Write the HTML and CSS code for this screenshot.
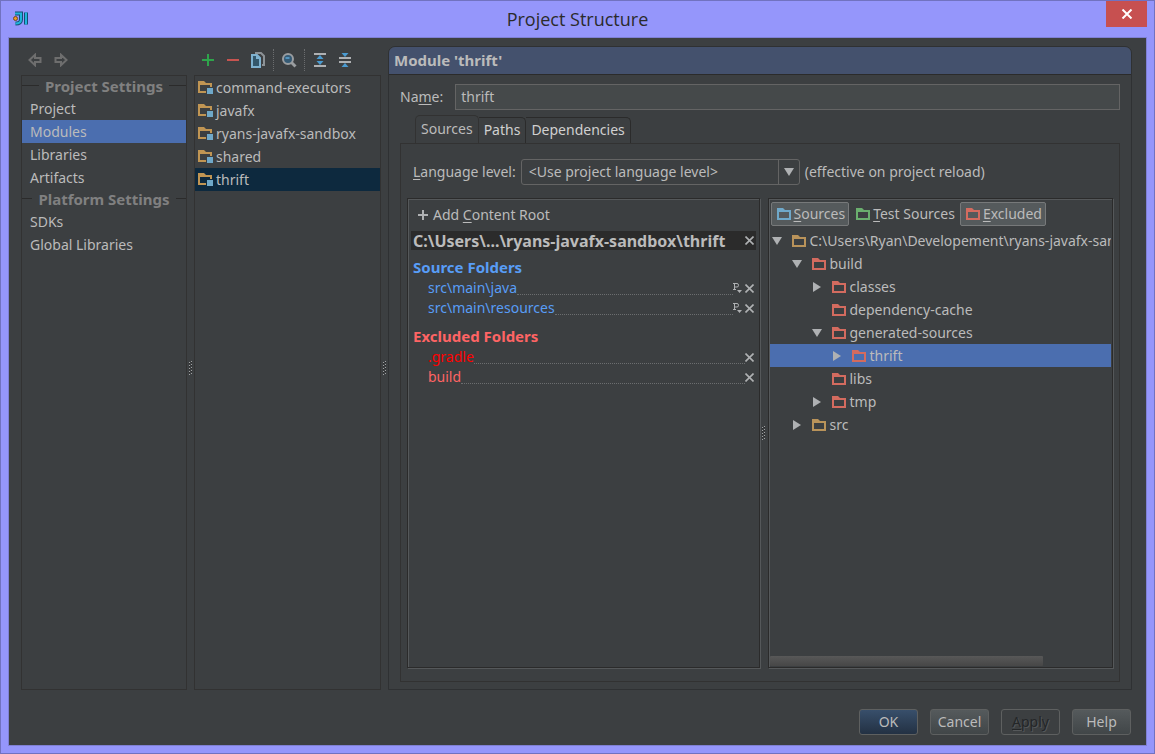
FILE: index.html
```
<!DOCTYPE html>
<html lang="en">
<head>
    <meta charset="UTF-8">
    <meta name="viewport" content="width=device-width, initial-scale=1.0">
    <title>Project Structure</title>
    <link rel="stylesheet" href="styles.css">
</head>
<body>
    <!-- shared icons -->
    <svg class="sprite" aria-hidden="true">
        <symbol id="folder" viewBox="0 0 14 12">
            <path fill="currentColor" fill-rule="evenodd" d="M0 0h6l2 2h6v10H0zM2 4v6h10V4z"/>
        </symbol>
        <symbol id="module" viewBox="0 0 15 13">
            <path fill="#c09553" fill-rule="evenodd" d="M0 0h6l2 2h6v4h-2V4H2v6h6v2H0z"/>
            <path fill="#6fa8c9" d="M9 7h6v6H9z"/>
        </symbol>
        <symbol id="down" viewBox="0 0 10 10">
            <path fill="#afb1b3" d="M0 1h10L5 9z"/>
        </symbol>
        <symbol id="right" viewBox="0 0 10 10">
            <path fill="#afb1b3" d="M1 0v10l8-5z"/>
        </symbol>
        <symbol id="cross" viewBox="0 0 9 9">
            <path fill="none" stroke="#afb1b3" stroke-width="1.600" d="M0.500 0.500l8 8M8.500 0.500l-8 8"/>
        </symbol>
        <symbol id="prefix" viewBox="0 0 9 10">
            <path fill="none" stroke="#afb1b3" d="M1.500 7V0.500h2.500q1.500 0 1.500 1.800t-1.500 1.700h-2.500M0 0.500h2M0 6.500h3"/>
            <path fill="#afb1b3" d="M4 7h5L6.500 10z"/>
        </symbol>
    </svg>

    <div class="window">
        <div class="title-bar">
            <svg class="logo" viewBox="0 0 16 16" width="16" height="16">
                <path fill="none" stroke="#164f73" stroke-width="4" d="M2 2.500h6v6q0 4-5.500 4M13 1.500v12"/>
                <path fill="none" stroke="#20b4dc" stroke-width="2" d="M2 2.500h6v6q0 4-5.500 4M13 1.500v12"/>
                <circle cx="2.500" cy="7.500" r="2" fill="#f39a1d" stroke="#6b4a2a"/>
            </svg>
            <h1>Project Structure</h1>
            <button class="close-btn" aria-label="Close">
                <svg viewBox="0 0 12 10" width="12" height="10"><path fill="none" stroke="#fff" stroke-width="2" d="M1.500 0.500l9 9M10.500 0.500l-9 9"/></svg>
            </button>
        </div>

        <div class="client">
            <div class="main">
                <div class="col settings">
                    <div class="toolbar">
                        <button aria-label="Back"><svg viewBox="0 0 14 14" width="14" height="14"><path fill="none" stroke="#6e6e6e" stroke-width="2" d="M1.500 7L7 1.800v3.200h5.500v4H7v3.200z"/></svg></button>
                        <button aria-label="Forward"><svg viewBox="0 0 14 14" width="14" height="14"><path fill="none" stroke="#6e6e6e" stroke-width="2" d="M12.500 7L7 1.800v3.200H1.500v4H7v3.200z"/></svg></button>
                    </div>
                    <div class="panel">
                        <h2>Project Settings</h2>
                        <ul>
                            <li><a href="#project">Project</a></li>
                            <li class="active"><a href="#modules">Modules</a></li>
                            <li><a href="#libraries">Libraries</a></li>
                            <li><a href="#artifacts">Artifacts</a></li>
                        </ul>
                        <h2>Platform Settings</h2>
                        <ul>
                            <li><a href="#sdks">SDKs</a></li>
                            <li><a href="#global">Global Libraries</a></li>
                        </ul>
                    </div>
                </div>
                <div class="splitter"></div>

                <div class="col modules">
                    <div class="toolbar">
                        <button aria-label="Add"><svg viewBox="0 0 16 16" width="16" height="16"><path stroke="#2ea44b" stroke-width="2" d="M8 2v12M2 8h12"/></svg></button>
                        <button aria-label="Remove"><svg viewBox="0 0 16 16" width="16" height="16"><path stroke="#c75450" stroke-width="2" d="M2 8h12"/></svg></button>
                        <button aria-label="Copy"><svg viewBox="0 0 16 16" width="16" height="16"><path fill="none" stroke="#8c9296" stroke-width="2" d="M5 1h6l3 3v9h-2"/><path fill="#34586c" stroke="#7fb2d0" stroke-width="2" d="M2 3h5l3 3v9H2z"/><path fill="#7fb2d0" d="M6 3h1l4 4H6z"/></svg></button>
                        <span class="sep"></span>
                        <button aria-label="Find usages"><svg viewBox="0 0 16 16" width="16" height="16"><circle cx="7" cy="7" r="5" fill="#355a74" stroke="#9a9da0" stroke-width="2"/><path stroke="#5393bd" stroke-width="2" d="M4.500 6h4"/><path stroke="#9a9da0" stroke-width="3" d="M10.500 10.500l4 4"/></svg></button>
                        <span class="sep"></span>
                        <button aria-label="Expand all"><svg viewBox="0 0 16 16" width="16" height="16"><path stroke="#afb1b3" stroke-width="2" d="M2 2h12M2 14h12"/><path fill="#4a9bd1" d="M8 3l3.500 4h-7zM8 13l3.500-4h-7z"/></svg></button>
                        <button aria-label="Collapse all"><svg viewBox="0 0 16 16" width="16" height="16"><path stroke="#afb1b3" stroke-width="2" d="M2 6h12M2 10h12"/><path fill="#4a9bd1" d="M8 5l3.500-4h-7zM8 11l3.500 4h-7z"/></svg></button>
                    </div>
                    <div class="panel">
                        <ul>
                            <li><svg class="mod-icon"><use href="#module"/></svg>command-executors</li>
                            <li><svg class="mod-icon"><use href="#module"/></svg>javafx</li>
                            <li><svg class="mod-icon"><use href="#module"/></svg>ryans-javafx-sandbox</li>
                            <li><svg class="mod-icon"><use href="#module"/></svg>shared</li>
                            <li class="active"><svg class="mod-icon"><use href="#module"/></svg>thrift</li>
                        </ul>
                    </div>
                </div>
                <div class="splitter"></div>

                <div class="detail">
                    <h2>Module 'thrift'</h2>
                    <div class="detail-body">
                        <div class="name-row">
                            <label for="name">Na<u>m</u>e:</label>
                            <input type="text" id="name" value="thrift">
                        </div>
                        <div class="tabs" role="tablist">
                            <button class="tab active" role="tab">Sources</button>
                            <button class="tab" role="tab">Paths</button>
                            <button class="tab" role="tab">Dependencies</button>
                        </div>
                        <div class="tab-panel">
                            <div class="level-row">
                                <label for="level"><u>L</u>anguage level:</label>
                                <div class="select-box">
                                    <select id="level">
                                        <option>&lt;Use project language level&gt;</option>
                                    </select>
                                    <span class="select-arrow"><svg class="icon10"><use href="#down"/></svg></span>
                                </div>
                                <span>(effective on project reload)</span>
                            </div>

                            <div class="panes">
                                <div class="pane roots">
                                    <button class="add-root"><svg viewBox="0 0 10 10" width="10" height="10"><path stroke="#afb1b3" stroke-width="2" d="M5 0v10M0 5h10"/></svg><span>Add <u>C</u>ontent Root</span></button>
                                    <div class="root-head">
                                        <span>C:\Users\...\ryans-javafx-sandbox\thrift</span>
                                        <button aria-label="Remove content root"><svg class="icon9"><use href="#cross"/></svg></button>
                                    </div>
                                    <div class="folder-group source">
                                        <h3>Source Folders</h3>
                                        <ul>
                                            <li><span>src\main\java</span><i></i><button aria-label="Edit prefix"><svg class="prefix"><use href="#prefix"/></svg></button><button aria-label="Remove"><svg class="icon9"><use href="#cross"/></svg></button></li>
                                            <li><span>src\main\resources</span><i></i><button aria-label="Edit prefix"><svg class="prefix"><use href="#prefix"/></svg></button><button aria-label="Remove"><svg class="icon9"><use href="#cross"/></svg></button></li>
                                        </ul>
                                    </div>
                                    <div class="folder-group excluded">
                                        <h3>Excluded Folders</h3>
                                        <ul>
                                            <li class="missing"><span>.gradle</span><i></i><button aria-label="Remove"><svg class="icon9"><use href="#cross"/></svg></button></li>
                                            <li><span>build</span><i></i><button aria-label="Remove"><svg class="icon9"><use href="#cross"/></svg></button></li>
                                        </ul>
                                    </div>
                                </div>
                                <div class="splitter"></div>
                                <div class="pane tree-pane">
                                    <div class="marks">
                                        <button class="mark on"><svg class="folder blue"><use href="#folder"/></svg><span><u>S</u>ources</span></button>
                                        <button class="mark"><svg class="folder green"><use href="#folder"/></svg><span><u>T</u>est Sources</span></button>
                                        <button class="mark on"><svg class="folder red"><use href="#folder"/></svg><span><u>E</u>xcluded</span></button>
                                    </div>
                                    <ul class="tree">
                                        <li class="l0"><svg class="icon10"><use href="#down"/></svg><svg class="folder tan"><use href="#folder"/></svg>C:\Users\Ryan\Developement\ryans-javafx-sandbox</li>
                                        <li class="l1"><svg class="icon10"><use href="#down"/></svg><svg class="folder red"><use href="#folder"/></svg>build</li>
                                        <li class="l2"><svg class="icon10"><use href="#right"/></svg><svg class="folder red"><use href="#folder"/></svg>classes</li>
                                        <li class="l2"><svg class="icon10"></svg><svg class="folder red"><use href="#folder"/></svg>dependency-cache</li>
                                        <li class="l2"><svg class="icon10"><use href="#down"/></svg><svg class="folder red"><use href="#folder"/></svg>generated-sources</li>
                                        <li class="l3 active"><svg class="icon10"><use href="#right"/></svg><svg class="folder red"><use href="#folder"/></svg>thrift</li>
                                        <li class="l2"><svg class="icon10"></svg><svg class="folder red"><use href="#folder"/></svg>libs</li>
                                        <li class="l2"><svg class="icon10"><use href="#right"/></svg><svg class="folder red"><use href="#folder"/></svg>tmp</li>
                                        <li class="l1"><svg class="icon10"><use href="#right"/></svg><svg class="folder tan"><use href="#folder"/></svg>src</li>
                                    </ul>
                                    <div class="scrollbar"><div class="thumb"></div></div>
                                </div>
                            </div>
                        </div>
                    </div>
                </div>
            </div>

            <div class="footer">
                <button class="btn primary">OK</button>
                <button class="btn">Cancel</button>
                <button class="btn" disabled><u>A</u>pply</button>
                <button class="btn">Help</button>
            </div>
        </div>
    </div>
</body>
</html>
```
FILE: styles.css
```
*{
    margin: 0;
    padding: 0;
    box-sizing: border-box;
}
body{
    font-family: "Noto Sans", "Open Sans", sans-serif;
    font-size: 14px;
    line-height: 20px;
    color: #bbb;
}
ul{
    list-style: none;
}
button, input, select{
    font: inherit;
    color: inherit;
    background: none;
    border: none;
}
a{
    color: inherit;
    text-decoration: none;
}
u{
    text-underline-offset: 2px;
}
svg{
    display: block;
    flex: none;
}
h2, h3{
    font-size: 15px;
    line-height: 20px;
}
.sprite{
    position: absolute;
    width: 0;
    height: 0;
}

/* window frame */
.window{
    display: flex;
    flex-direction: column;
    min-height: 100vh;
    padding: 0 7px 7px;
    background-color: #9596fb;
    border: 1px solid #7172c0;
}
.title-bar{
    display: grid;
    grid-template-columns: 41px 1fr 41px;
    height: 36px;
}
.title-bar h1{
    font: 18px/36px "Open Sans", sans-serif;
    color: #2b2b2b;
    text-align: center;
}
.logo{
    margin: 10px 5px;
}
.close-btn{
    display: flex;
    align-items: center;
    justify-content: center;
    height: 26px;
    background-color: #c75050;
}
.client{
    flex: 1;
    display: flex;
    flex-direction: column;
    padding: 8px 14px 10px 12px;
    background-color: #3c3f41;
    border: 1px solid #7f80d4;
}
.main{
    flex: 1;
    display: flex;
}
.col{
    display: flex;
    flex-direction: column;
}
.settings{
    width: 166px;
}
.modules{
    width: 187px;
}
.panel{
    flex: 1;
    border: 1px solid #323232;
}
.toolbar{
    display: flex;
    align-items: center;
    gap: 9px;
    height: 29px;
    padding: 0 6px 2px;
}
.settings .toolbar{
    gap: 12px;
    padding-left: 7px;
}
.sep{
    height: 22px;
    margin: 0 -2px;
    border-left: 1px dotted #6b6d6f;
}
.splitter{
    display: flex;
    align-items: center;
    justify-content: center;
    width: 7px;
}
.splitter::before{
    content: "";
    width: 3px;
    height: 14px;
    background:
        repeating-linear-gradient(#a0a2a4 0 1px, #2b2b2b 1px 2px, transparent 2px 3px) 0 1px / 1px 13px no-repeat,
        repeating-linear-gradient(#a0a2a4 0 1px, #2b2b2b 1px 2px, transparent 2px 3px) 2px 0 / 1px 13px no-repeat;
}

/* lists */
.panel li{
    display: flex;
    align-items: center;
    height: 23px;
}
.settings li{
    padding-left: 8px;
}
.settings .active{
    background-color: #4b6eaf;
}
.settings h2{
    display: flex;
    align-items: center;
    gap: 6px;
    height: 21px;
    padding: 0 4px 2px 0;
    color: #808080;
    white-space: nowrap;
}
.settings h2::before, .settings h2::after{
    content: "";
    flex: 1;
    border-top: 1px solid #2b2b2b;
}
.settings h2::after{
    margin-right: -4px;
}
.modules li{
    gap: 3px;
    padding-left: 3px;
}
.modules .active{
    background-color: #0d293e;
}
.mod-icon{
    width: 15px;
    height: 13px;
}

/* module details */
.detail{
    flex: 1;
    display: flex;
    flex-direction: column;
    min-width: 0;
    border: 1px solid #2f3133;
    border-radius: 7px 7px 0 0;
}
.detail h2{
    height: 28px;
    padding-left: 5px;
    line-height: 27px;
    background-color: #44516d;
    border-bottom: 1px solid #2b2b2b;
    border-radius: 6px 6px 0 0;
}
.detail-body{
    flex: 1;
    display: flex;
    flex-direction: column;
    padding: 9px 11px 7px;
}
.name-row{
    display: flex;
    align-items: center;
    gap: 12px;
}
.name-row input{
    flex: 1;
    height: 26px;
    padding: 0 5px 2px;
    background-color: #45494a;
    border: 1px solid #646464;
}
.tabs{
    display: flex;
    align-items: flex-end;
    height: 33px;
    padding-left: 15px;
}
.tab{
    height: 26px;
    padding: 0 5px 2px;
    color: #d0d0d0;
    border: 1px solid #2b2b2b;
    border-width: 1px 1px 0 0;
    border-radius: 0 5px 0 0;
}
.tab.active{
    height: 28px;
    color: #bbb;
    border-left-width: 1px;
    border-color: #323232;
    border-radius: 5px 5px 0 0;
}
.tab-panel{
    flex: 1;
    display: flex;
    flex-direction: column;
    padding: 15px 6px 13px;
    border: 1px solid #323232;
}
.level-row{
    display: flex;
    align-items: center;
    gap: 5px;
    padding-left: 6px;
    margin-bottom: 13px;
}
.select-box{
    display: flex;
    width: 279px;
    height: 26px;
    border: 1px solid #646464;
    border-radius: 3px;
}
.select-box select{
    flex: 1;
    appearance: none;
    padding-left: 7px;
    border-right: 1px solid #646464;
}
.select-arrow{
    display: flex;
    align-items: center;
    justify-content: center;
    width: 20px;
}
.icon10{
    width: 10px;
    height: 10px;
}
.icon9{
    width: 9px;
    height: 9px;
}
.prefix{
    width: 9px;
    height: 10px;
}
.panes{
    flex: 1;
    display: grid;
    grid-template-columns: minmax(0, 352fr) 8px minmax(0, 345fr);
}
.pane{
    border: 1px solid #2b2b2b;
    box-shadow: inset 1px 1px #55585a, 1px 1px #55585a;
}
.roots{
    padding: 5px 3px;
}
.add-root{
    display: flex;
    align-items: center;
    gap: 5px;
    height: 22px;
    margin-bottom: 5px;
    padding-left: 7px;
}
.root-head{
    display: flex;
    align-items: center;
    justify-content: space-between;
    height: 19px;
    padding: 0 2px;
    background-color: #2b2b2b;
    font-size: 16px;
    line-height: 18px;
    font-weight: bold;
    white-space: nowrap;
}
.folder-group{
    padding: 7px 2px 0;
}
.folder-group + .folder-group{
    padding-top: 8px;
}
.folder-group h3{
    margin-bottom: 1px;
}
.folder-group li{
    display: flex;
    align-items: center;
    height: 20px;
    padding-left: 15px;
}
.folder-group i{
    flex: 1;
    align-self: flex-end;
    margin-bottom: 3px;
    border-bottom: 1px dotted #6b6d6f;
}
.folder-group button + button{
    margin-left: 3px;
}
.source{
    color: #589df6;
}
.excluded{
    color: #ff6464;
}
.excluded .missing{
    color: #f00;
}

/* directory tree */
.tree-pane{
    display: flex;
    flex-direction: column;
    padding: 3px 1px 1px;
}
.marks{
    display: flex;
    gap: 1px;
    padding: 0 1px;
    margin-bottom: 3px;
}
.mark{
    display: flex;
    align-items: center;
    gap: 3px;
    height: 24px;
    padding: 0 3px 0 5px;
    border: 1px solid transparent;
    border-radius: 2px;
    white-space: nowrap;
}
.mark.on{
    background-color: #555a5c;
    border-color: #77797a;
}
.folder{
    width: 14px;
    height: 12px;
}
.blue{
    color: #6fa8c9;
}
.green{
    color: #6aae6e;
}
.red{
    color: #d36b5f;
}
.tan{
    color: #b9935a;
}
.tree{
    flex: 1;
    overflow: hidden;
}
.tree li{
    display: flex;
    align-items: center;
    gap: 4px;
    height: 23px;
    white-space: nowrap;
}
.tree .icon10{
    margin-right: 6px;
}
.tree .active{
    background-color: #4b6eaf;
}
.l0{
    padding-left: 2px;
}
.l1{
    padding-left: 22px;
}
.l2{
    padding-left: 42px;
}
.l3{
    padding-left: 62px;
}
.thumb{
    width: 80%;
    height: 10px;
    background: linear-gradient(#585858, #474747);
    border-radius: 1px;
}

/* dialog buttons */
.footer{
    display: flex;
    justify-content: flex-end;
    gap: 12px;
    padding: 19px 1px 0 0;
}
.btn{
    width: 59px;
    height: 26px;
    background: linear-gradient(#555a5c, #414648);
    border: 1px solid #5e6060;
    border-radius: 3px;
}
.btn.primary{
    background: linear-gradient(#384f6b, #233143);
}
.btn:disabled{
    background: none;
    color: #242628;
    text-shadow: 1px 1px #55585a;
}
```
